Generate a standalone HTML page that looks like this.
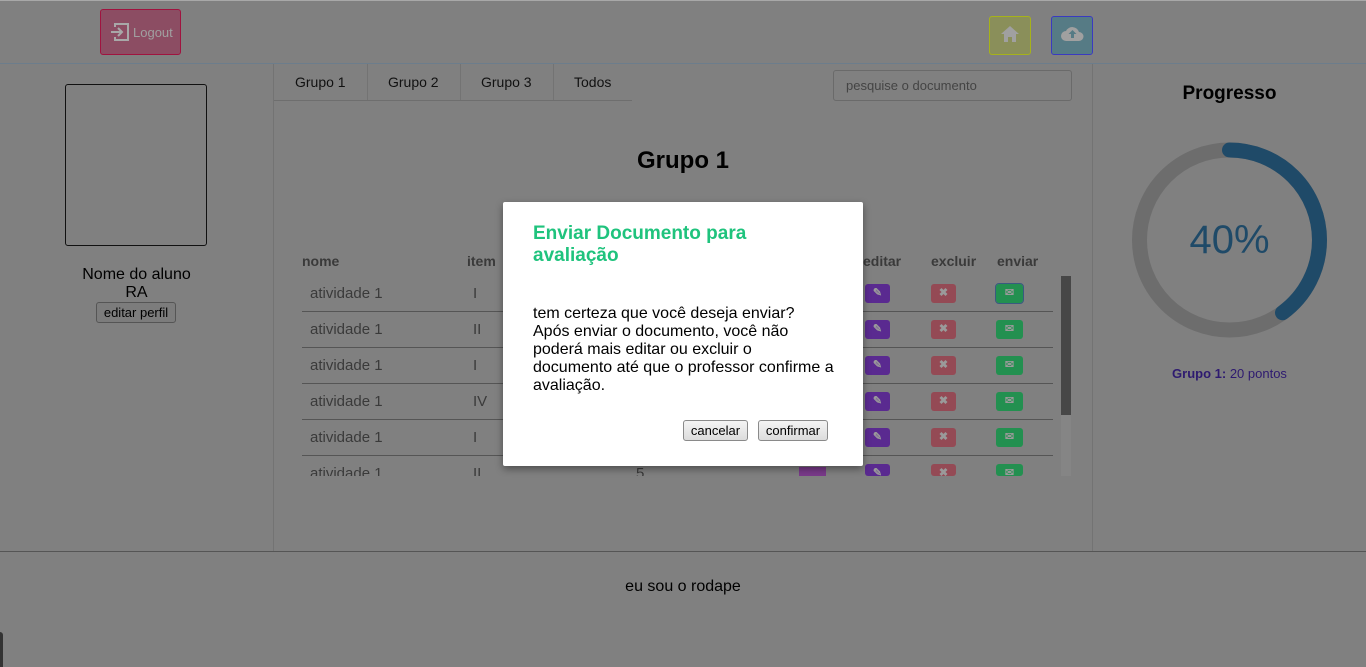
<!DOCTYPE html>
<html><head><meta charset="utf-8"><style>
*{box-sizing:border-box;margin:0;padding:0}
body{width:1366px;height:667px;background:#808080;font-family:"Liberation Sans",sans-serif;position:relative;overflow:hidden;color:#000}
.abs{position:absolute}
.btn{position:absolute;height:24px;border-radius:3px;font-size:13px;text-align:center;line-height:24px;color:#000;background:linear-gradient(#f4f4f4,#dcdcdc);border:1px solid #8a8a8a}
.ic{position:absolute;width:25px;height:19px;border-radius:3px;color:#9a9a9a;font-size:11px;text-align:center;line-height:19px;font-weight:bold}
.row{position:absolute;left:302px;width:751px;height:36px;border-bottom:1px solid #555;font-size:15px;color:#3a3a3a}
</style></head><body>
<div class="abs" style="left:0;top:0;width:1366px;height:1px;background:#a8a8a8"></div>
<div class="abs" style="left:0;top:63px;width:1366px;height:1px;background:#6c7d8c"></div>
<div class="abs" style="left:100px;top:9px;width:81px;height:46px;background:#8c4d63;border:1px solid #a0133f;border-radius:3px;color:#a0a0a0;font-size:13px;line-height:46px;padding-left:32px">Logout</div>
<svg class="abs" style="left:110px;top:22px" width="20" height="20" viewBox="0 0 20 20" fill="none" stroke="#a8a8a8" stroke-width="2"><path d="M5 5V2h13v16H5v-3"/><path d="M1 10h10M8 6l4 4-4 4"/></svg>
<div class="abs" style="left:989px;top:16px;width:42px;height:39px;background:#8a8f5a;border:1px solid #a6b21a;border-radius:3px"></div>
<svg class="abs" style="left:1000px;top:24px" width="20" height="20" viewBox="0 0 20 20"><path d="M10 2L1 10h3v8h4v-5h4v5h4v-8h3z" fill="#a0a0a0"/></svg>
<div class="abs" style="left:1051px;top:16px;width:42px;height:39px;background:#567b85;border:1px solid #3a3ac0;border-radius:3px"></div>
<svg class="abs" style="left:1060px;top:24px" width="25" height="20" viewBox="0 0 25 20"><path d="M6 17a5 5 0 0 1 0-10 7 7 0 0 1 13 1 4.5 4.5 0 0 1 0 9z" fill="#a0a0a0"/><path d="M12.5 6l-4 4h2.5v4h3v-4h2.5z" fill="#567b85"/></svg>
<div class="abs" style="left:273px;top:64px;width:1px;height:487px;background:#737373"></div>
<div class="abs" style="left:1092px;top:64px;width:1px;height:487px;background:#737373"></div>
<div class="abs" style="left:0;top:551px;width:1366px;height:1px;background:#555"></div>
<div class="abs" style="left:65px;top:84px;width:142px;height:162px;border:1px solid #111;border-radius:3px"></div>
<div class="abs" style="left:0;top:266px;width:273px;text-align:center;font-size:16px;line-height:18px">Nome do aluno<br>RA</div>
<div class="btn" style="left:96px;top:302px;width:80px;height:21px;line-height:19px;background:#7c7c7c;border-color:#555">editar perfil</div>
<div class="abs" style="left:274px;top:64px;width:358px;height:37px;border-bottom:1px solid #6e6e6e;font-size:14px;color:#111">
<span class="abs" style="left:21px;top:10px">Grupo 1</span>
<div class="abs" style="left:93px;top:0;width:1px;height:36px;background:#737373"></div>
<span class="abs" style="left:114px;top:10px">Grupo 2</span>
<div class="abs" style="left:186px;top:0;width:1px;height:36px;background:#737373"></div>
<span class="abs" style="left:207px;top:10px">Grupo 3</span>
<div class="abs" style="left:279px;top:0;width:1px;height:36px;background:#737373"></div>
<span class="abs" style="left:300px;top:10px">Todos</span>
</div>
<div class="abs" style="left:833px;top:70px;width:239px;height:31px;border:1px solid #6a6a6a;border-radius:3px;font-size:13px;color:#444;padding:7px 12px">pesquise o documento</div>
<div class="abs" style="left:274px;top:147px;width:818px;text-align:center;font-size:24px;font-weight:bold">Grupo 1</div>
<div class="abs" style="top:253px;font-size:14px;font-weight:bold;color:#3a3a3a;left:0;width:1100px">
<span class="abs" style="left:302px">nome</span><span class="abs" style="left:467px">item</span><span class="abs" style="left:863px">editar</span><span class="abs" style="left:931px">excluir</span><span class="abs" style="left:997px">enviar</span></div>
<div class="row" style="top:276px"><span class="abs" style="left:8px;top:9px">atividade 1</span><span class="abs" style="left:171px;top:9px">I</span></div>
<div class="row" style="top:312px"><span class="abs" style="left:8px;top:9px">atividade 1</span><span class="abs" style="left:171px;top:9px">II</span></div>
<div class="row" style="top:348px"><span class="abs" style="left:8px;top:9px">atividade 1</span><span class="abs" style="left:171px;top:9px">I</span></div>
<div class="row" style="top:384px"><span class="abs" style="left:8px;top:9px">atividade 1</span><span class="abs" style="left:171px;top:9px">IV</span></div>
<div class="row" style="top:420px"><span class="abs" style="left:8px;top:9px">atividade 1</span><span class="abs" style="left:171px;top:9px">I</span></div>
<div class="abs" style="left:302px;top:456px;width:751px;height:20px;overflow:hidden;font-size:15px;color:#3a3a3a"><span class="abs" style="left:8px;top:9px">atividade 1</span><span class="abs" style="left:171px;top:9px">II</span><span class="abs" style="left:334px;top:9px">5</span></div>
<div class="abs" style="left:799px;top:467px;width:27px;height:9px;background:#7a3a8a"></div>
<div id="icons"></div>
<div class="abs" style="left:1061px;top:276px;width:10px;height:200px;background:#858585"></div>
<div class="abs" style="left:1061px;top:276px;width:10px;height:139px;background:#474747"></div>
<div class="abs" style="left:1093px;top:83px;width:273px;text-align:center;font-size:19px;font-weight:bold">Progresso</div>
<svg class="abs" style="left:1130px;top:141px" width="200" height="200" viewBox="0 0 200 200">
<circle cx="99.5" cy="99" r="90" fill="none" stroke="#6d6d6d" stroke-width="15"/>
<circle cx="99.5" cy="99" r="90" fill="none" stroke="#1f4a68" stroke-width="15" stroke-linecap="round" stroke-dasharray="226 1000" transform="rotate(-90 99.5 99)"/>
<text x="99.5" y="112" text-anchor="middle" font-family="Liberation Sans" font-size="40" fill="#1f4a68">40%</text>
</svg>
<div class="abs" style="left:1093px;top:366px;width:273px;text-align:center;font-size:13px;color:#2e1a70"><b>Grupo 1:</b> 20 pontos</div>
<div class="abs" style="left:0;top:578px;width:1366px;text-align:center;font-size:16px">eu sou o rodape</div>
<div class="abs" style="left:0;top:632px;width:3px;height:35px;background:#333;border-radius:0 3px 0 0"></div>
<div class="abs" style="left:503px;top:202px;width:360px;height:264px;background:#fff;box-shadow:0 3px 8px rgba(0,0,0,.4);border-radius:2px">
<div class="abs" style="left:30px;top:21px;width:300px;font-size:19px;font-weight:bold;color:#1fc37d;line-height:22px">Enviar Documento para avaliação</div>
<div class="abs" style="left:30px;top:103px;width:320px;font-size:16px;line-height:18px;white-space:nowrap">tem certeza que você deseja enviar?<br>Após enviar o documento, você não<br>poderá mais editar ou excluir o<br>documento até que o professor confirme a<br>avaliação.</div>
<div class="btn" style="left:180px;top:218px;width:65px;height:21px;line-height:19px">cancelar</div>
<div class="btn" style="left:255px;top:218px;width:70px;height:21px;line-height:19px">confirmar</div>
</div>
<script>
var h='';for(var i=0;i<6;i++){var t=284+i*36;var ht=(i==5)?Math.min(19,476-t):19;
h+='<div class="ic" style="left:865px;top:'+t+'px;height:'+ht+'px;overflow:hidden;background:#5a2a90">✎</div>';
h+='<div class="ic" style="left:931px;top:'+t+'px;height:'+ht+'px;overflow:hidden;background:#944a55">✖</div>';
h+='<div class="ic" style="left:996px;top:'+t+'px;width:27px;height:'+ht+'px;overflow:hidden;background:#239050;'+(i==0?'outline:1px solid #3a5a80;':'')+'">✉</div>';}
document.getElementById('icons').innerHTML=h;
</script>
</body></html>
